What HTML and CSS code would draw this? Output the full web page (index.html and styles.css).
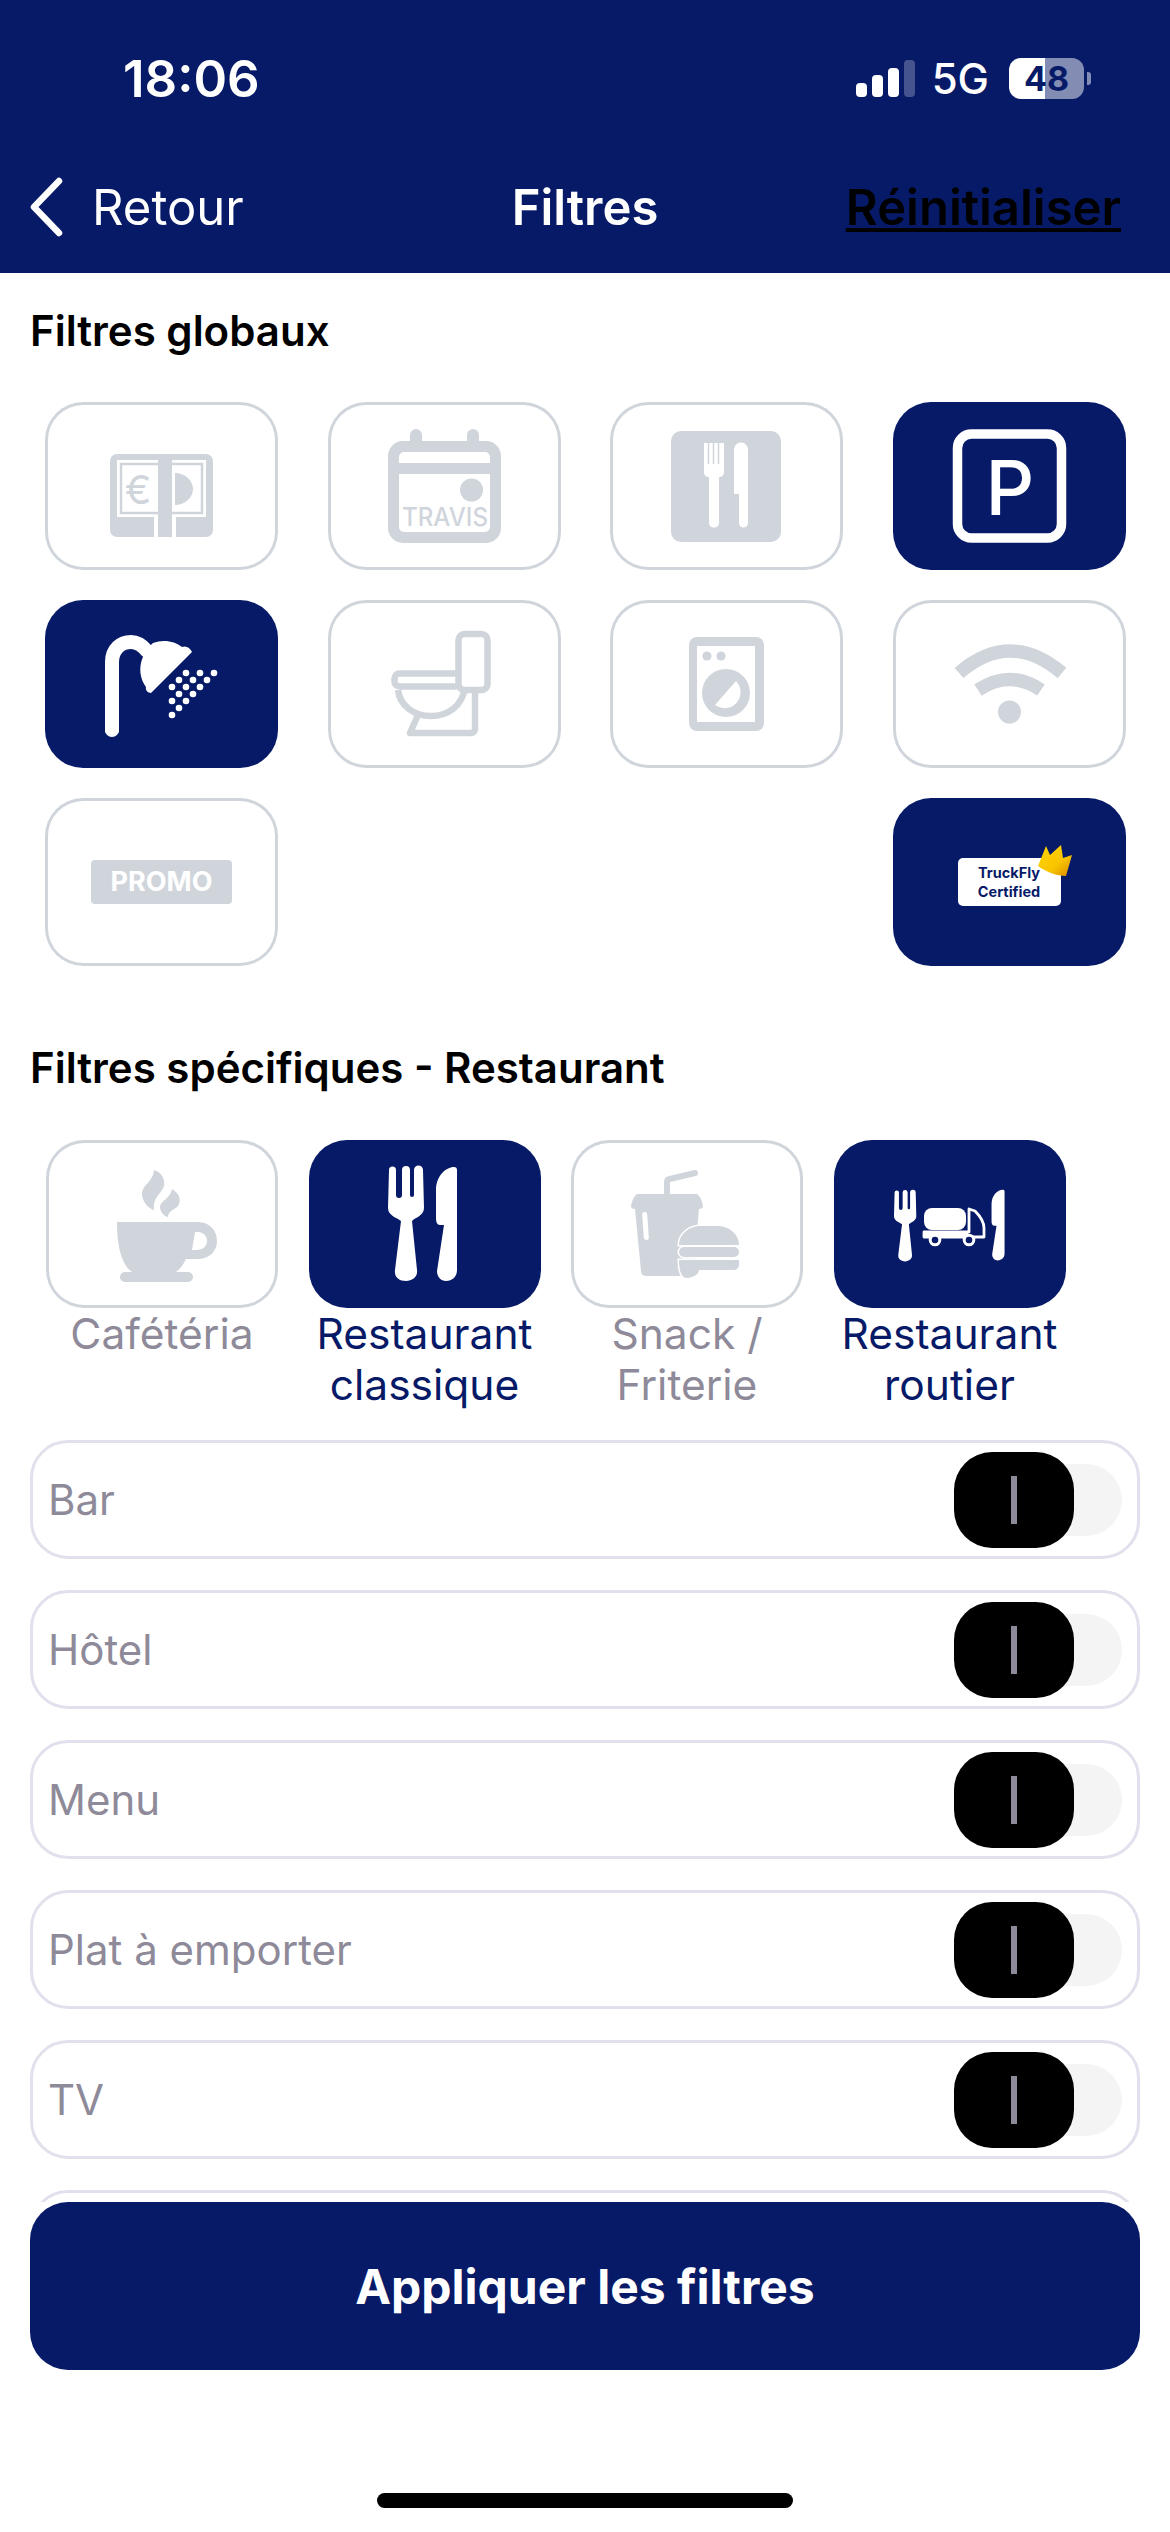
FILE: index.html
```html
<!DOCTYPE html>
<html lang="fr">
<head>
    <meta charset="UTF-8">
    <meta name="viewport" content="width=device-width, initial-scale=1.0">
    <title>Filtres</title>
    <link rel="stylesheet" href="styles.css">
</head>
<body>
    <header class="header">
        <div class="status-bar">
            <span class="time">18:06</span>
            <div class="status-icons">
                <div class="signal">
                    <span class="bar bar-1"></span>
                    <span class="bar bar-2"></span>
                    <span class="bar bar-3"></span>
                    <span class="bar bar-4"></span>
                </div>
                <span class="network">5G</span>
                <div class="battery-wrap">
                    <div class="battery">48</div>
                    <span class="battery-nub"></span>
                </div>
            </div>
        </div>
        <nav class="nav">
            <div class="nav-back">
                <svg class="chevron" viewBox="0 0 36 60"><path d="M31 4 L6 30 L31 56" fill="none" stroke="#fff" stroke-width="6.5" stroke-linecap="round" stroke-linejoin="round"/></svg>
                <span>Retour</span>
            </div>
            <div class="nav-title">Filtres</div>
            <div class="nav-reset"><a class="reset-link">Réinitialiser</a></div>
        </nav>
    </header>

    <main class="scroll">
        <h2 class="section-title first">Filtres globaux</h2>
        <div class="global-grid">
            <!-- paiement -->
            <div class="tile">
                <svg viewBox="0 0 233 168" fill="currentColor">
                    <rect x="65" y="52" width="103" height="83" rx="7"/>
                    <rect x="72" y="58" width="89" height="57" fill="#fff"/>
                    <rect x="76" y="62" width="81" height="49" fill="none" stroke="currentColor" stroke-width="2.5"/>
                    <rect x="109" y="115" width="22" height="20" fill="#fff"/>
                    <rect x="113" y="52" width="14" height="83"/>
                    <text class="euro" x="93" y="102" text-anchor="middle">€</text>
                    <path d="M130 71 A18 16 0 0 1 130 103 Z"/>
                </svg>
            </div>
            <!-- travis -->
            <div class="tile">
                <svg viewBox="0 0 233 168" fill="currentColor">
                    <rect x="82" y="27" width="12" height="24" rx="6"/>
                    <rect x="139" y="27" width="12" height="24" rx="6"/>
                    <rect x="60" y="39" width="113" height="102" rx="15"/>
                    <rect x="71" y="50" width="91" height="80" rx="5" fill="#fff"/>
                    <rect x="71" y="61" width="91" height="11"/>
                    <ellipse cx="143.500" cy="88" rx="11.500" ry="11.500"/>
                    <text class="travis" x="74" y="124" textLength="86" lengthAdjust="spacingAndGlyphs">TRAVIS</text>
                </svg>
            </div>
            <!-- restaurant -->
            <div class="tile">
                <svg viewBox="0 0 233 168" fill="currentColor">
                    <rect x="61" y="29" width="110" height="111" rx="10"/>
                    <path d="M94 41 H114 V70 C114 73 112 75 109 75 V121 C109 127 99 127 99 121 V75 C96 75 94 73 94 70 Z" fill="#fff"/>
                    <path d="M98.500 41 V62 M103.500 41 V62 M108.500 41 V62" stroke="currentColor" stroke-width="1.500" fill="none"/>
                    <path d="M124 92 V48 C124 38 138 38 138 48 V121 C138 127 129 127 129 121 V92 Z" fill="#fff"/>
                </svg>
            </div>
            <!-- parking -->
            <div class="tile on">
                <svg viewBox="0 0 233 168" fill="currentColor">
                    <rect x="64.500" y="32" width="104" height="104" rx="14" fill="none" stroke="currentColor" stroke-width="9.500"/>
                    <text class="parking" x="117" y="113" text-anchor="middle">P</text>
                </svg>
            </div>
            <!-- douche -->
            <div class="tile on">
                <svg viewBox="0 0 233 168" fill="currentColor">
                    <path d="M67 130 V62 C67 49 76 42 86 42 C92 42 97 45 102 51" fill="none" stroke="currentColor" stroke-width="14" stroke-linecap="round"/>
                    <rect x="60" y="122" width="14" height="11" rx="2"/>
                    <path d="M108 43 C118 39 130 41 137 47 C141 45 146 49 147 52 L106 93 C103 93 100 90 101 87 C93 76 92 58 108 43 Z"/>
                    <g>
                        <circle cx="141" cy="73" r="3.300"/><circle cx="155" cy="73" r="3.300"/><circle cx="169" cy="73" r="3.300"/>
                        <circle cx="134" cy="80" r="3.300"/><circle cx="148" cy="80" r="3.300"/><circle cx="162" cy="80" r="3.300"/>
                        <circle cx="127" cy="87" r="3.300"/><circle cx="141" cy="87" r="3.300"/><circle cx="155" cy="87" r="3.300"/>
                        <circle cx="134" cy="94" r="3.300"/><circle cx="148" cy="94" r="3.300"/>
                        <circle cx="127" cy="101" r="3.300"/><circle cx="141" cy="101" r="3.300"/>
                        <circle cx="134" cy="108" r="3.300"/>
                        <circle cx="127" cy="115" r="3.300"/>
                    </g>
                </svg>
            </div>
            <!-- toilettes -->
            <div class="tile">
                <svg viewBox="0 0 233 168" fill="none" stroke="currentColor" stroke-width="6.500" stroke-linejoin="round">
                    <path d="M147 92 V129 C147 132 145 133 143 133 H82 L90 115"/>
                    <path d="M70 90 C72 106 86 116 103 116 C120 116 134 106 137 88"/>
                    <rect x="66.500" y="73.500" width="66" height="13" rx="5"/>
                    <rect x="130.500" y="34" width="29" height="56" rx="6" fill="#fff"/>
                </svg>
            </div>
            <!-- laverie -->
            <div class="tile">
                <svg viewBox="0 0 233 168" fill="currentColor">
                    <rect x="79" y="37" width="75" height="94" rx="8"/>
                    <rect x="87" y="46" width="58" height="76" fill="#fff"/>
                    <circle cx="97" cy="56" r="4.600"/>
                    <circle cx="111" cy="56" r="4.600"/>
                    <circle cx="116" cy="93" r="24"/>
                    <path d="M126 81 A16 16 0 0 1 105 105 Z" fill="#fff"/>
                </svg>
            </div>
            <!-- wifi -->
            <div class="tile">
                <svg viewBox="0 0 233 168" fill="none" stroke="currentColor" stroke-width="13.500" stroke-linejoin="round">
                    <path d="M66 73 Q117 29 169 73"/>
                    <path d="M85 90 Q117 69 148 90"/>
                    <ellipse cx="116.500" cy="112" rx="11.500" ry="11.500" fill="currentColor" stroke="none"/>
                </svg>
            </div>
            <!-- promo -->
            <div class="tile tile-center">
                <span class="promo-tag">PROMO</span>
            </div>
            <div class="spacer"></div>
            <div class="spacer"></div>
            <!-- certified -->
            <div class="tile on tile-center">
                <div class="certified">
                    <span>TruckFly</span>
                    <span>Certified</span>
                    <svg class="crown" viewBox="0 0 36 33">
                        <defs>
                            <linearGradient id="crownFill" x1="0" y1="0" x2="1" y2="1">
                                <stop offset="0" stop-color="#ffd400"/>
                                <stop offset="0.6" stop-color="#f8c400"/>
                                <stop offset="1" stop-color="#d98a00"/>
                            </linearGradient>
                        </defs>
                        <path d="M1 22 L9 2 L13 11 L24 1 L26 14 L35 11 L29 32 C20 32 9 28 1 22 Z" fill="url(#crownFill)"/>
                    </svg>
                </div>
            </div>
        </div>

        <h2 class="section-title">Filtres spécifiques - Restaurant</h2>
        <div class="specific-grid">
            <div class="specific-item">
                <div class="tile">
                    <svg viewBox="0 0 233 168" fill="currentColor">
                        <path d="M71 82 H152 C164 82 171 91 171 101 C171 112 162 119 152 119 H140 C137 125 134 129 130 132 H86 C75 124 71 105 71 82 Z"/>
                        <path d="M149 92 H152 C157 92 161 96 161 101 C161 106 157 110 150 110 H146 Z" fill="#fff"/>
                        <rect x="74" y="132" width="73" height="10" rx="5"/>
                        <path d="M108 30 C118 33 121 44 116 50 C111 57 107 60 108 70 C101 68 96 60 96 54 C96 45 107 42 108 30 Z"/>
                        <path d="M126 49 C133 53 136 60 132 66 C128 70 122 71 122 77 C117 76 114 71 114 67 C114 61 125 58 126 49 Z"/>
                    </svg>
                </div>
                <div class="specific-label">Cafétéria</div>
            </div>
            <div class="specific-item on">
                <div class="tile on">
                    <svg viewBox="0 0 233 168" fill="currentColor">
                        <path d="M80 30 a3.500 3.500 0 0 1 7 0 V55 a3 3 0 0 0 6 0 V30 a4 4 0 0 1 8 0 V55 a2 2 0 0 0 4 0 V30 a4.500 4.500 0 0 1 9 0 L115 68 C115 76 105 78 103 81 L108 130 C109 137 103 141 97 141 C90 141 85 137 86 130 L92 81 C89 78 79 76 79 68 Z"/>
                        <path d="M148 30 V130 C148 137 143 141 137 141 C132 141 128 137 128 131 L135 85 H131 C128 85 127 82 127 78 V50 C127 36 137 27 145 27 C147 27 148 28 148 30 Z"/>
                    </svg>
                </div>
                <div class="specific-label">Restaurant classique</div>
            </div>
            <div class="specific-item">
                <div class="tile">
                    <svg viewBox="0 0 233 168" fill="currentColor">
                        <path d="M96 56 V42 C96 40 97 39 99 39 L124 33" fill="none" stroke="currentColor" stroke-width="6" stroke-linecap="round"/>
                        <path d="M66 54 H126 C129 56 131 60 132 66 C132 68 131 69 128 69 L122 136 H76 C72 136 70 134 70 131 L64 69 C61 69 60 68 60 66 C61 60 63 56 66 54 Z"/>
                        <rect x="72" y="72" width="5" height="28" rx="2.500" transform="rotate(-4 74 86)" fill="#fff"/>
                        <g stroke="#fff" stroke-width="3" paint-order="stroke">
                            <path d="M108 105 C108 94 118 86 130 86 H146 C158 86 168 94 168 105 Z"/>
                            <rect x="108" y="107" width="60" height="10" rx="5"/>
                            <path d="M108 120 H168 V124 C168 128 166 130 162 130 H128 C128 134 122 138 116 138 C110 138 108 130 108 120 Z"/>
                        </g>
                    </svg>
                </div>
                <div class="specific-label">Snack / Friterie</div>
            </div>
            <div class="specific-item on">
                <div class="tile on">
                    <svg viewBox="0 0 233 168" fill="currentColor">
                        <g transform="translate(11 34) scale(0.62)">
                            <path d="M80 30 a3.500 3.500 0 0 1 7 0 V55 a3 3 0 0 0 6 0 V30 a4 4 0 0 1 8 0 V55 a2 2 0 0 0 4 0 V30 a4.500 4.500 0 0 1 9 0 L115 68 C115 76 105 78 103 81 L108 130 C109 137 103 141 97 141 C90 141 85 137 86 130 L92 81 C89 78 79 76 79 68 Z"/>
                        </g>
                        <g transform="translate(78.800 33) scale(0.62)">
                            <path d="M148 30 V130 C148 137 143 141 137 141 C132 141 128 137 128 131 L135 85 H131 C128 85 127 82 127 78 V50 C127 36 137 27 145 27 C147 27 148 28 148 30 Z"/>
                        </g>
                        <rect x="90" y="68" width="42" height="22" rx="8"/>
                        <path d="M135 69 L141 71 C146 76 150 81 150 88 V97 H90 V92 H135 Z" fill="none" stroke="currentColor" stroke-width="2.800" stroke-linejoin="round"/>
                        <rect x="90" y="92" width="44" height="6"/>
                        <circle cx="101" cy="100" r="4.800" fill="#071a68" stroke="currentColor" stroke-width="3"/>
                        <circle cx="135" cy="100" r="4.800" fill="#071a68" stroke="currentColor" stroke-width="3"/>
                    </svg>
                </div>
                <div class="specific-label">Restaurant routier</div>
            </div>
        </div>

        <div class="option-list">
            <div class="option-row">
                <span>Bar</span>
                <div class="switch"><div class="thumb"><span class="thumb-line"></span></div></div>
            </div>
            <div class="option-row">
                <span>Hôtel</span>
                <div class="switch"><div class="thumb"><span class="thumb-line"></span></div></div>
            </div>
            <div class="option-row">
                <span>Menu</span>
                <div class="switch"><div class="thumb"><span class="thumb-line"></span></div></div>
            </div>
            <div class="option-row">
                <span>Plat à emporter</span>
                <div class="switch"><div class="thumb"><span class="thumb-line"></span></div></div>
            </div>
            <div class="option-row">
                <span>TV</span>
                <div class="switch"><div class="thumb"><span class="thumb-line"></span></div></div>
            </div>
            <div class="option-row"></div>
        </div>
    </main>

    <button class="apply-btn">Appliquer les filtres</button>
    <div class="home-bar"></div>
</body>
</html>
```

FILE: styles.css
```css
* {
    box-sizing: border-box;
}

body {
    margin: 0;
    width: 1170px;
    height: 2532px;
    overflow: hidden;
    background: #fff;
    color: #000;
    font-family: Inter, "Noto Sans", sans-serif;
}

/* header */
.header {
    height: 273px;
    background: #071a68;
    color: #fff;
}

.status-bar {
    height: 156px;
    display: flex;
    justify-content: space-between;
    align-items: center;
    padding: 0 79px 0 123px;
}

.time {
    font-size: 51px;
    font-weight: 600;
}

.status-icons {
    display: flex;
    align-items: center;
    gap: 20px;
}

.signal {
    display: flex;
    align-items: flex-end;
    gap: 5px;
    height: 37px;
    margin-right: -3px;
}

.bar {
    width: 11px;
    border-radius: 4px;
    background: #fff;
}

.bar-1 { height: 14px; }
.bar-2 { height: 22px; }
.bar-3 { height: 29px; }
.bar-4 { height: 37px; background: rgba(255,255,255,0.25); }

.network {
    font-size: 42px;
    font-weight: 500;
}

.battery-wrap {
    display: flex;
    align-items: center;
    gap: 3px;
}

.battery {
    width: 75px;
    height: 41px;
    border-radius: 12px;
    background: linear-gradient(to right, #fff 48%, rgba(255,255,255,0.5) 48%);
    color: #071a68;
    font-size: 34px;
    font-weight: 700;
    line-height: 41px;
    text-align: center;
}

.battery-nub {
    width: 4px;
    height: 13px;
    border-radius: 0 3px 3px 0;
    background: rgba(255,255,255,0.5);
}

.nav {
    height: 102px;
    display: grid;
    grid-template-columns: 1fr auto 1fr;
    align-items: center;
    padding: 0 28px;
    font-size: 49px;
}

.nav-back {
    display: flex;
    align-items: center;
    gap: 28px;
}

.chevron {
    width: 36px;
    height: 60px;
}

.nav-title {
    font-weight: 600;
}

.nav-reset {
    text-align: right;
    padding-right: 21px;
}

.reset-link {
    color: #000;
    font-weight: 600;
    text-decoration: underline;
}

/* scroll area, cut off by the apply button */
.scroll {
    height: 1929px;
    overflow: hidden;
    padding: 0 30px;
}

.section-title {
    margin: 77px 0 47px;
    font-size: 42px;
    font-weight: 600;
    line-height: 50px;
}

.section-title.first {
    margin-top: 33px;
    margin-bottom: 46px;
}

.global-grid {
    display: grid;
    grid-template-columns: repeat(4, 233px);
    grid-auto-rows: 168px;
    column-gap: 49.5px;
    row-gap: 30px;
    padding-left: 15px;
}

.tile {
    height: 168px;
    border-radius: 38px;
    box-shadow: inset 0 0 0 3px #d0d5dc;
    background: #fff;
    color: #d0d5dc;
}

.tile.on {
    background: #071a68;
    box-shadow: none;
    color: #fff;
}

.tile svg {
    display: block;
    width: 233px;
    height: 168px;
}

.tile-center {
    display: flex;
    align-items: center;
    justify-content: center;
}

.euro {
    font-size: 40px;
    font-weight: 400;
}

.travis {
    font-size: 25px;
    font-weight: 500;
}

.parking {
    font-size: 76px;
    font-weight: 500;
}

.promo-tag {
    width: 141px;
    height: 44px;
    border-radius: 4px;
    background: #d0d5dc;
    color: #fff;
    font-size: 27px;
    font-weight: 700;
    line-height: 44px;
    text-align: center;
}

.certified {
    position: relative;
    width: 103px;
    height: 48px;
    border-radius: 5px;
    background: #fff;
    color: #071a68;
    font-size: 14.5px;
    font-weight: 700;
    line-height: 19px;
    text-align: center;
    display: flex;
    flex-direction: column;
    justify-content: center;
}

.tile svg.crown {
    position: absolute;
    top: -14px;
    right: -12px;
    width: 36px;
    height: 33px;
}

.specific-grid {
    display: grid;
    grid-template-columns: repeat(4, 232px);
    column-gap: 30.5px;
    padding-left: 16px;
    margin-bottom: 30px;
}

.specific-label {
    height: 102px;
    font-size: 42.5px;
    line-height: 51px;
    text-align: center;
    color: #8e8a99;
}

.specific-item.on .specific-label {
    color: #071a68;
}

.option-list {
    display: flex;
    flex-direction: column;
    gap: 31px;
}

.option-row {
    height: 119px;
    flex: none;
    display: flex;
    justify-content: space-between;
    align-items: center;
    padding: 0 15px 0 15px;
    border: 3px solid #e2e0ec;
    border-radius: 38px;
    font-size: 42px;
    color: #8e8a99;
}

.switch {
    position: relative;
    width: 168px;
    height: 96px;
}

.switch::before {
    content: "";
    position: absolute;
    top: 12px;
    right: 0;
    width: 120px;
    height: 72px;
    border-radius: 36px;
    background: #f4f4f4;
}

.thumb {
    position: relative;
    width: 120px;
    height: 96px;
    border-radius: 38px;
    background: #000;
    display: flex;
    align-items: center;
    justify-content: center;
}

.thumb-line {
    width: 6px;
    height: 48px;
    background: #8e8a99;
}

/* footer */
.apply-btn {
    display: block;
    width: 1110px;
    height: 168px;
    margin: 0 30px;
    border: none;
    border-radius: 38px;
    background: #071a68;
    color: #fff;
    font-family: inherit;
    font-size: 48px;
    font-weight: 700;
}

.home-bar {
    width: 416px;
    height: 15px;
    margin: 123px auto 0;
    border-radius: 8px;
    background: #000;
}
```
